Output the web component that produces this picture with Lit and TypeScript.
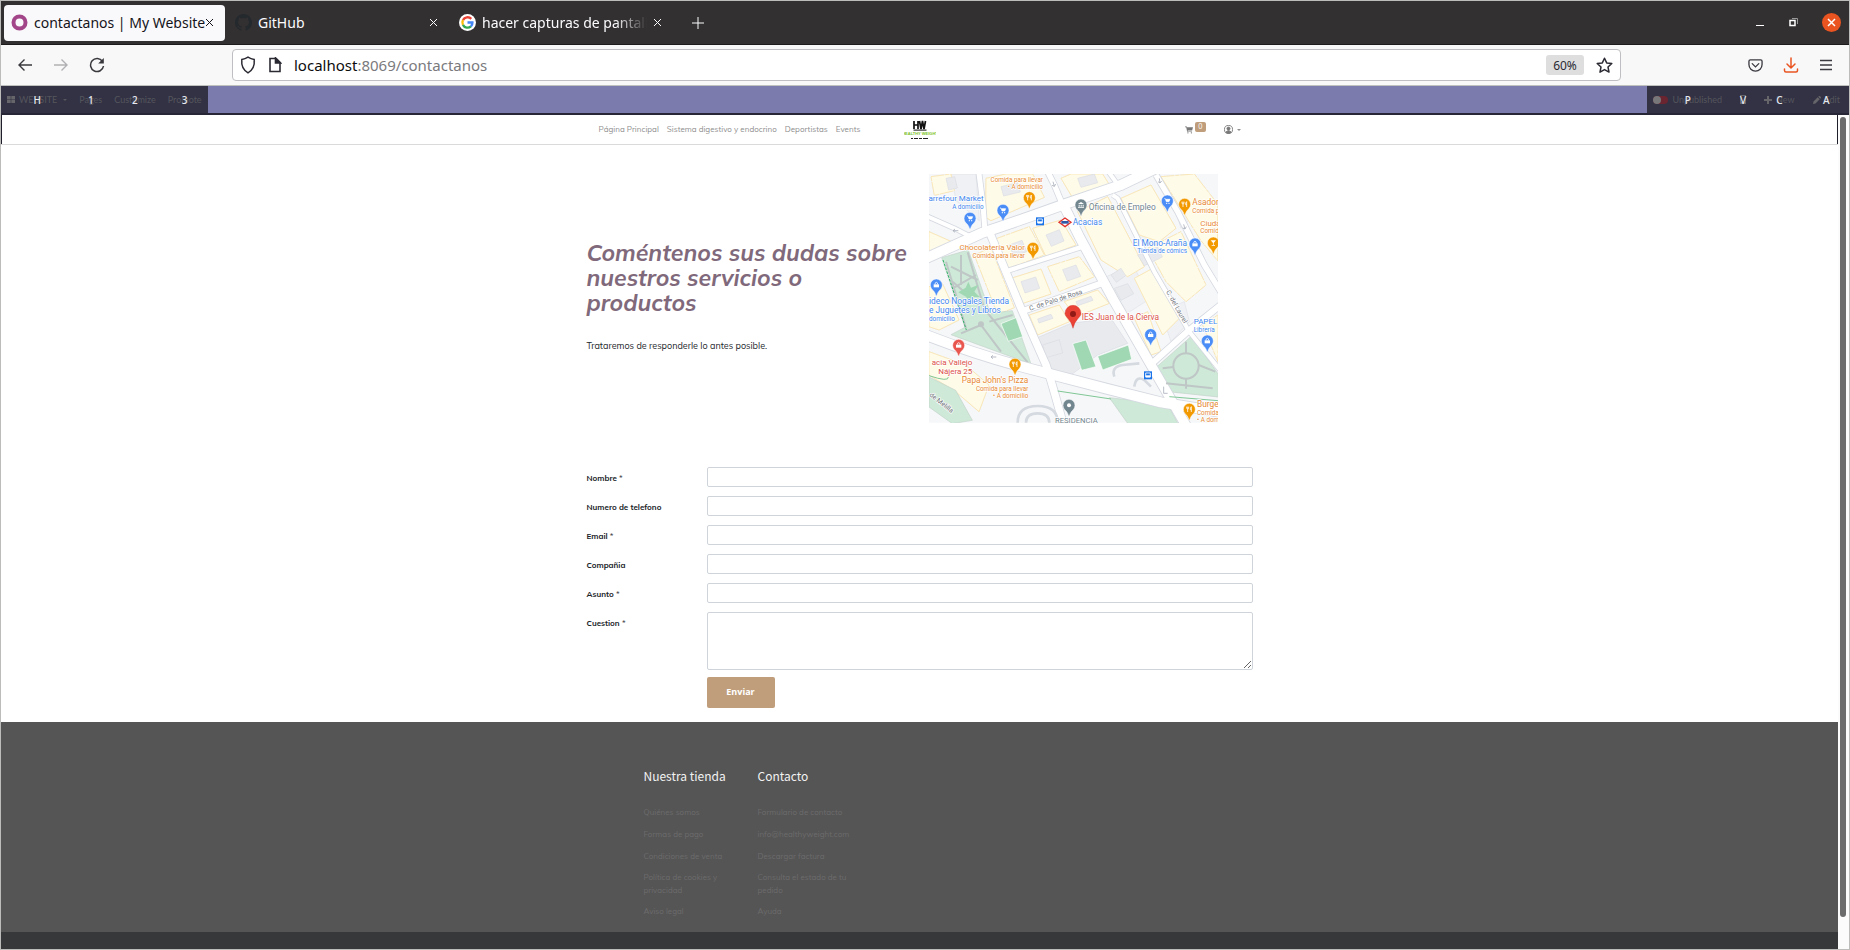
import { LitElement, html, css, svg, nothing } from "lit";
import { customElement, property } from "lit/decorators.js";

/* ---------- Browser chrome ---------- */

@customElement("browser-chrome")
class BrowserChrome extends LitElement {
  static styles = css`
    :host { display: block; font-family: "Noto Sans", "Open Sans", sans-serif; font-size: 14px; }
    button { border: 0; padding: 0; margin: 0; background: none; color: inherit; font: inherit; display: flex; align-items: center; justify-content: center; }
    svg { display: block; flex: none; }
    .tabs { display: flex; align-items: center; height: 43px; background: #333031; border-bottom: 1px solid #1d1b1c; padding: 0 8px 0 3px; color: #fbfbfe; }
    .tab { display: flex; align-items: center; gap: 6px; width: 221px; height: 36px; box-sizing: border-box; padding: 0 11px 0 7px; border-radius: 4px; white-space: nowrap; margin-right: 3px; }
    .tab.active { background: #f9f9fb; color: #15141a; }
    .title { flex: 1; min-width: 0; overflow: hidden; }
    .tab.long .title { mask-image: linear-gradient(to left, transparent, #000 32px); }
    .tab.active .title { margin-right: -6px; }
    .plus { margin-left: 16px; }
    .window { margin-left: auto; display: flex; align-items: center; gap: 24px; }
    .bar { display: flex; align-items: center; height: 40px; background: #f8f8f9; border-bottom: 1px solid #bfc1bf; color: #2b2a33; padding: 0 16px; }
    .nav { display: flex; gap: 20px; width: 215px; }
    .url { flex: 1; display: flex; align-items: center; height: 32px; box-sizing: border-box; border: 1px solid #bfbfc3; border-radius: 4px; background: #fff; padding: 0 7px; gap: 12px; font-size: 15px; }
    .address { flex: 1; margin: 0; color: #7a7a7d; white-space: nowrap; }
    .address b { font-weight: 400; color: #0c0c0d; }
    .zoom { background: #dedede; border-radius: 3px; width: 38px; height: 20px; font-size: 12px; }
    .tools { display: flex; gap: 20px; margin-left: 127px; }
  `;
  private cross() {
    return html`<button aria-label="Close tab"><svg width="9" height="9" viewBox="0 0 9 9" fill="none" stroke="currentColor"><path d="M1 1l7 7M8 1l-7 7"/></svg></button>`;
  }
  render() {
    return html`
      <div class="tabs">
        <div class="tab active">
          <svg width="17" height="17" viewBox="0 0 17 17" fill="none" stroke="#a24689" stroke-width="4"><circle cx="8.500" cy="8.500" r="6"/></svg>
          <span class="title">contactanos | My Website</span>${this.cross()}
        </div>
        <div class="tab">
          <svg width="17" height="17" viewBox="0 0 16 16" fill="#24292e"><path d="M8 0C3.580 0 0 3.580 0 8c0 3.540 2.290 6.530 5.470 7.590.4.070.55-.17.55-.38v-1.490c-2.010.37-2.530-.49-2.690-.94-.09-.23-.48-.94-.82-1.130-.28-.15-.68-.52-.01-.53.63-.01 1.080.58 1.230.82.72 1.210 1.870.87 2.330.66.07-.52.28-.87.51-1.070-1.780-.2-3.640-.89-3.640-3.950 0-.87.31-1.590.82-2.150-.08-.2-.36-1.020.08-2.120 0 0 .67-.21 2.200.82a7.400 7.400 0 0 1 4 0c1.530-1.040 2.200-.82 2.200-.82.44 1.100.16 1.920.08 2.120.51.56.82 1.270.82 2.150 0 3.070-1.870 3.750-3.650 3.950.29.25.54.73.54 1.480v2.200c0 .21.15.46.55.38A8 8 0 0 0 8 0z"/></svg>
          <span class="title">GitHub</span>${this.cross()}
        </div>
        <div class="tab long">
          <svg width="17" height="17" viewBox="0 0 18 18"><circle cx="9" cy="9" r="9" fill="#fff"/><g fill="none" stroke-width="2.500"><path d="M13 5.200A5.400 5.400 0 0 0 4.200 6.500" stroke="#ea4335"/><path d="M4.200 6.500a5.400 5.400 0 0 0 0 5" stroke="#fbbc05"/><path d="M4.200 11.500a5.400 5.400 0 0 0 8.400 1.600" stroke="#34a853"/><path d="M9 9h5.200a5.400 5.400 0 0 1-1.600 4.100" stroke="#4285f4"/></g></svg>
          <span class="title">hacer capturas de pantalla</span>${this.cross()}
        </div>
        <button class="plus" aria-label="New tab"><svg width="12" height="12" viewBox="0 0 12 12" stroke="currentColor"><path d="M6 0v12M0 6h12"/></svg></button>
        <div class="window">
          <button aria-label="Minimize"><svg width="10" height="10" viewBox="0 0 10 10" stroke="#fff"><path d="M1 7.500h8"/></svg></button>
          <button aria-label="Restore"><svg width="9" height="9" viewBox="0 0 9 9" fill="none"><path d="M3 .5h5.500V6" stroke="#999"/><path d="M1 2.500h5v5H1z" stroke="#fff" stroke-width="1.500"/></svg></button>
          <button aria-label="Close"><svg width="19" height="19" viewBox="0 0 19 19"><circle cx="9.500" cy="9.500" r="9.500" fill="#e95420"/><path d="M6 6l7 7M13 6l-7 7" stroke="#fff" stroke-width="1.500"/></svg></button>
        </div>
      </div>
      <div class="bar">
        <div class="nav">
          <button aria-label="Back"><svg width="16" height="16" viewBox="0 0 16 16" fill="none" stroke="#38383d" stroke-width="1.400"><path d="M15 8H2M7.500 2.500L2 8l5.500 5.500"/></svg></button>
          <button aria-label="Forward"><svg width="16" height="16" viewBox="0 0 16 16" fill="none" stroke="#b1b1b3" stroke-width="1.400"><path d="M1 8h13M8.500 2.500L14 8l-5.500 5.500"/></svg></button>
          <button aria-label="Reload"><svg width="16" height="16" viewBox="0 0 16 16" fill="none" stroke="#38383d" stroke-width="1.500"><path d="M13.500 4.500A6.500 6.500 0 1 0 14.500 9"/><path d="M14.800 1v5.600H9.200z" fill="#38383d" stroke="none"/></svg></button>
        </div>
        <div class="url">
          <svg width="16" height="18" viewBox="0 0 16 18" fill="none" stroke="#2b2a33" stroke-width="1.500"><path d="M8 1.200c2 1.300 4 2 6.200 2.200.6 6-1.500 10.800-6.200 13.400C3.300 14.200 1.200 9.400 1.800 3.400 4 3.200 6 2.500 8 1.200z"/></svg>
          <svg width="14" height="16" viewBox="0 0 14 16" fill="none" stroke="#2b2a33" stroke-width="1.600"><path d="M2 1.500h6l4 4v9H2z"/><path d="M7.500 1v5H12.500z" fill="#2b2a33"/></svg>
          <p class="address"><b>localhost</b>:8069/contactanos</p>
          <button class="zoom">60%</button>
          <button aria-label="Bookmark"><svg width="17" height="17" viewBox="0 0 17 17" fill="none" stroke="#2b2a33" stroke-width="1.500" stroke-linejoin="round"><path d="M8.500 1.200l2.200 4.700 5.100.6-3.800 3.500 1 5.100-4.500-2.500L4 15.100 5 10 1.200 6.500l5.100-.6z"/></svg></button>
        </div>
        <div class="tools">
          <button aria-label="Pocket"><svg width="15" height="15" viewBox="0 0 16 16" fill="none" stroke="#3a3a40" stroke-width="1.400" stroke-linecap="round"><path d="M2.500 2h11q1.500 0 1.500 1.500V7a7 7 0 0 1-14 0V3.500Q1 2 2.500 2z"/><path d="M4.500 6L8 9.500 11.500 6"/></svg></button>
          <button aria-label="Downloads"><svg width="16" height="16" viewBox="0 0 16 16" fill="none" stroke="#e95420" stroke-width="1.500" stroke-linecap="round"><path d="M8 1v10M4 7l4 4 4-4M1.500 12v1.500q0 1.500 1.500 1.500h10q1.500 0 1.500-1.500V12"/></svg></button>
          <button aria-label="Menu"><svg width="14" height="14" viewBox="0 0 14 14" stroke="#3a3a40" stroke-width="1.300"><path d="M1 2.500h12M1 7h12M1 11.500h12"/></svg></button>
        </div>
      </div>`;
  }
}

/* ---------- Editor bar with shortcut keys over each entry ---------- */

@customElement("admin-bar")
class AdminBar extends LitElement {
  static styles = css`
    :host { display: flex; justify-content: space-between; height: 27px; background: #7c7bad; border-bottom: 2px solid #262636; font-family: Lato, sans-serif; font-size: 9px; }
    .group { display: flex; align-items: center; background: #323244; color: #55555c; }
    .left { padding: 0 6px; gap: 12px; }
    .right { padding: 0 9px 0 6px; gap: 18px; }
    button { position: relative; display: flex; align-items: center; gap: 4px; border: 0; padding: 0; background: none; font: inherit; color: inherit; }
    .key { position: absolute; inset: 0; display: flex; align-items: center; justify-content: center; color: #e6e9f0; font: 500 10px/12px "Noto Sans", sans-serif; }
    .toggle { display: flex; width: 15px; height: 8px; border-radius: 4px; background: #6a2530; }
    .toggle i { width: 8px; height: 8px; border-radius: 4px; background: #77777a; }
    .caret { border: 2px solid transparent; border-top-color: currentColor; border-bottom: 0; margin-left: 2px; }
  `;
  private key(k: string) { return html`<span class="key">${k}</span>`; }
  render() {
    return html`
      <div class="group left">
        <button><svg width="8" height="7" viewBox="0 0 8 7" fill="#66666a"><path d="M0 0h3.700v3.200H0zM4.300 0H8v3.200H4.300zM0 3.800h3.700V7H0zM4.300 3.800H8V7H4.300z"/></svg>WEBSITE<span class="caret"></span>${this.key("H")}</button>
        ${[["Pages", "1"], ["Customize", "2"], ["Promote", "3"]].map(([t, k]) => html`<button>${t}${this.key(k)}</button>`)}
      </div>
      <div class="group right">
        <button><span class="toggle"><i></i></span>Unpublished${this.key("P")}</button>
        <button aria-label="Mobile preview"><svg width="6" height="9" viewBox="0 0 6 9"><path d="M0 0h6v9H0z" fill="#66666a"/><path d="M1 1h4v6H1z" fill="#323244"/></svg>${this.key("V")}</button>
        <button><svg width="8" height="8" viewBox="0 0 8 8" fill="#66666a"><path d="M3 0h2v3h3v2H5v3H3V5H0V3h3z"/></svg>New${this.key("C")}</button>
        <button><svg width="8" height="8" viewBox="0 0 8 8" fill="#66666a"><path d="M0 8l.5-2.500L4.700 1.300l2 2L2.500 7.500zM5.300.7L6 0q.5-.2 1 .2l.8.8q.4.5 0 1l-.6.7z"/></svg>Edit${this.key("A")}</button>
      </div>`;
  }
}

/* ---------- Neighbourhood map ---------- */

type Label = [string, number, number, string, number, ("start" | "end")?];

@customElement("area-map")
class AreaMap extends LitElement {
  static styles = css`
    :host { display: block; }
    svg { display: block; width: 100%; height: auto; }
    .edge { fill: none; stroke: #d5d9e0; stroke-linejoin: round; }
    .road { fill: none; stroke: #fff; stroke-linejoin: round; }
    .block { fill: #fffcf0; stroke: #e3e6ea; stroke-width: 2; stroke-linejoin: round; }
    .plain { fill: #eff1f4; stroke: #e0e3e8; stroke-width: 2; }
    .house { fill: #fffbe9; stroke: #fae5ae; stroke-width: 2.500; stroke-linejoin: round; }
    .park { fill: #cee9d7; stroke: #c3d3ca; stroke-width: 2; }
    .path { fill: none; stroke: #bfc6c6; stroke-width: 6; }
    .field { fill: #a0d8b3; stroke: #fff; stroke-width: 2; }
    .grey { fill: #e8eaee; stroke: #dadde2; stroke-width: 2; }
    text { font-family: Roboto, sans-serif; paint-order: stroke; stroke: #fff; stroke-width: 4; stroke-linejoin: round; }
  `;
  private pin(x: number, y: number, color: string, kind: string) {
    const glyph: Record<string, unknown> = {
      food: svg`<path d="M-5 -8v6M-5 -2v10M-8 -8v4q0 3 3 3t3 -3v-4M6 8v-16q-4 3 -3 9h3" fill="none" stroke="#fff" stroke-width="2.400"/>`,
      cart: svg`<path d="M-9 -7h3l3 9h8l3 -7h-12" fill="#fff" stroke="#fff" stroke-width="2"/><circle cx="-2" cy="7" r="2" fill="#fff"/><circle cx="5" cy="7" r="2" fill="#fff"/>`,
      bag: svg`<path d="M-8 -2h16v9h-16z" fill="#fff"/><path d="M-4 -2q0 -6 4 -6t4 6" fill="none" stroke="#fff" stroke-width="2.400"/>`,
      dot: svg`<circle r="6" fill="#fff"/>`,
      bank: svg`<path d="M-9 -3l9 -6 9 6zM-7 -1h3v6h-3zM-1 -1h3v6h-3zM5 -1h3v6h-3zM-9 6h18v2h-18z" fill="#fff"/>`,
      drink: svg`<path d="M-8 -8h16l-7 8v6h4v2h-10v-2h4v-6z" fill="#fff"/>`,
    };
    return svg`<g transform="translate(${x} ${y})"><path d="M-18 0a18 18 0 1 1 36 0c0 9 -6 14 -10 18q-5 6 -7 14h-2q-2 -8 -7 -14c-4 -4 -10 -9 -10 -18z" fill=${color} stroke="#fff" stroke-width="1.500"/>${glyph[kind]}</g>`;
  }
  render() {
    const roads: [string, number][] = [
      ["M10 282L180 205Q300 165 430 118L600 60 700 12", 30],
      ["M172 10L186 120 192 200", 15],
      ["M205 200L300 430 375 600Q395 660 430 790", 22],
      ["M425 115L475 215 575 400 690 600 800 790", 28],
      ["M10 508Q180 575 360 620L560 672 720 712 905 742", 30],
      ["M705 30L770 140 850 300 905 390", 16],
      ["M575 90L590 100 700 320 805 500 905 625", 12],
      ["M690 598L805 495 905 415", 18],
      ["M245 322L485 245", 13],
      ["M300 440L430 395 550 352", 18],
      ["M375 10L400 60 425 120", 16],
      ["M555 10L595 65", 12],
      ["M10 150L100 190 150 215", 12],
    ];
    const houses = [
      "M30 35l60 -8 10 50 -60 14z", "M195 40l60 -13h80l35 70 -160 70 -16 -10z", "M420 40l30 -13h95l25 40 -110 40z",
      "M215 225l110 -40 45 85 -120 45z", "M335 190l85 -25 45 75 -90 35z", "M270 340l90 -28 30 75 -90 30z", "M380 305l95 -30 45 60 -105 45z",
      "M325 450l90 -30 30 50 -95 40z", "M430 410l100 -35 35 40 -100 40z", "M160 270l50 -22 70 180 -50 20z",
      "M470 140l90 -45 110 210 -50 30 -80 -50z", "M600 100l90 -40 75 130 -50 40 -60 -20z", "M680 250l100 -50 75 160 -60 50 -60 -60z",
      "M640 340l55 -30 80 150 -50 50z", "M24 365l40 -10 50 110 -60 30 -30 -10z", "M720 35l100 -8 70 90v170l-50 -60z",
      "M640 460l40 -20 40 120 -30 10z", "M24 560l110 40 70 60 -30 80 -70 -60 -80 -50z", "M845 480l46 -30v140z", "M24 200l90 40 -90 30z",
    ];
    const plains = ["M545 340l90 -40 55 100 -80 50z", "M655 110l55 120 -45 15 -40 -80z", "M720 440l70 -30 15 60 -55 60z", "M90 27h75l10 140 -70 -60z", "M740 60l70 100 -30 30z"];
    const courts = ["M240 65l50 -12 8 28 -50 12z", "M375 210l40 -16 14 34 -38 16z", "M265 240l38 -14 14 34 -38 14z", "M300 350l44 -14 12 34 -44 14z", "M425 314l40 -14 14 34 -40 14z", "M350 462l40 -14 6 12 -42 14z", "M465 410l45 -16 6 12 -46 16z", "M75 40l26 -5 8 34 -26 6z", "M470 40l50 -13 10 26 -50 14z"];
    const O = "#e88a32", B = "#4287ee", R = "#dc5149", G = "#72858e";
    const labels: Label[] = [
      ["Comida para llevar", 366, 50, O, 19, "end"], ["• A domicilio", 366, 72, O, 19, "end"],
      ["arrefour Market", 188, 108, B, 24, "end"], ["A domicilio", 188, 132, B, 19, "end"],
      ["Oficina de Empleo", 503, 136, G, 25], ["Acacias", 455, 181, B, 25],
      ["Asador", 814, 121, O, 25], ["Comida p", 814, 144, O, 19], ["Ciuda", 838, 182, O, 24], ["Comid", 838, 205, O, 19],
      ["Chocolatería Valor", 312, 255, O, 24, "end"], ["Comida para llevar", 312, 278, O, 19, "end"],
      ["El Mono-Araña", 798, 242, B, 25, "end"], ["Tienda de cómics", 798, 265, B, 19, "end"],
      ["ideco Nogales Tienda", 24, 417, B, 25], ["e Juguetes y Libros", 24, 444, B, 25], ["domicilio", 24, 467, B, 19],
      ["IES Juan de la Cierva", 482, 465, R, 25], ["PAPEL", 818, 477, B, 24], ["Librería", 818, 500, B, 19],
      ["acia Vallejo", 154, 599, R, 24, "end"], ["Nájera 25", 154, 626, R, 24, "end"],
      ["Papa John's Pizza", 322, 655, O, 25, "end"], ["Comida para llevar", 322, 678, O, 19, "end"], ["• A domicilio", 322, 700, O, 19, "end"],
      ["RESIDENCIA", 402, 775, G, 23], ["Burge", 828, 727, O, 25], ["Comida", 828, 750, O, 19], ["• A dom", 828, 772, O, 19],
    ];
    return html`<svg viewBox="24 27 867 746" role="img" aria-label="Mapa">
      <path d="M24 27h867v746h-867z" fill="#f6f7f9"/>
      ${houses.map((d) => svg`<path class="block" d=${d}/>`)}
      ${plains.map((d) => svg`<path class="plain" d=${d}/>`)}
      ${houses.map((d, i) => svg`<path class="house" d=${d} stroke-dasharray=${i % 3 ? nothing : "40 3 12 3"}/>`)}
      ${courts.map((d) => svg`<path class="grey" d=${d}/>`)}
      <path class="grey" d="M345 520l105 -45 120 -15 50 75 -90 35 -80 60 -60 -10zM365 540l50 -16 10 40 -50 14z"/>
      <path class="grey" d="M570 330l30 -20 14 22 -28 20zM650 270l60 -24 14 30 -54 26zM580 370l40 -14 18 30 -38 20z"/>
      <path class="park" d="M62 278l80 -23 66 190 66 -8 56 160 -240 -88 42 -22z"/>
      <path class="path" d="M75 290l60 200M140 262l50 170 130 160M95 350l80 70M165 330l-70 40M90 305l80 40M120 270l0 90M180 480l-60 25M205 470l70 -20M180 480l60 80"/>
      <circle cx="180" cy="478" r="9" fill="#bfc6c6"/>
      <path d="M112 382l22 -14 8 -18 8 18 22 -8 -12 20 16 16 -22 0 -10 22 -8 -22z" fill="#a0d8b3"/>
      <path d="M66 285l70 210" fill="none" stroke="#34b36a" stroke-width="3" stroke-dasharray="8 4"/>
      <path class="park" d="M24 636l80 40 50 90 -60 10 -70 -50z"/>
      <path class="park" d="M565 698l175 20 32 60h-150z"/>
      <path class="park" d="M708 605l104 -92 80 115v68l-150 -16z"/>
      ${roads.map(([d, w]) => svg`<path class="edge" d=${d} stroke-width=${w + 5}/>`)}
      ${roads.map(([d, w]) => svg`<path class="road" d=${d} stroke-width=${w}/>`)}
      <circle cx="795" cy="603" r="38" class="path"/>
      <path class="path" d="M795 530v35M795 641v30M725 610l32 -4M833 600l50 20M735 655l140 15"/>
      <path class="field" d="M455 536l40 -11 30 80 -43 11zM530 574l92 -34 10 43 -87 32zM240 476l45 -18 20 57 -43 14z"/>
      <path d="M580 635q-10 -30 25 -35l50 -5M640 665q5 -35 30 -20l20 20M290 773q0 -50 60 -50t60 50M315 773q0 -28 35 -28t35 28" fill="none" stroke="#d5d9e0" stroke-width="8"/>
      <path d="M410 678l160 24M745 695l146 12M24 632q60 20 58 4" fill="none" stroke="#7fc796" stroke-width="3"/>
      <path d="M112 197h-16l6 -5m-6 5l6 5M226 576h-16l6 -5m-6 5l6 5M396 50l4 14 4 -7m-4 7l-7 -3M715 40l2 14 5 -6m-5 6l-6 -4M788 178l4 14 4 -7m-4 7l-7 -3M728 665v20h12" fill="none" stroke="#a9afba" stroke-width="2.500"/>
      <g font-size="20" fill="#6d7278">
        <text transform="translate(327 437) rotate(-18)">C. de Palo de Rosa</text>
        <text transform="translate(735 380) rotate(61)">C. del Laurel</text>
        <text transform="translate(24 692) rotate(38)">de Melilla</text>
      </g>
      ${labels.map(([t, x, y, c, s, a]) => svg`<text x=${x} y=${y} fill=${c} font-size=${s} text-anchor=${a ?? "start"}>${t}</text>`)}
      ${[[325, 98], [791, 118], [336, 250], [282, 598], [805, 733]].map(([x, y]) => this.pin(x, y, "#f29900", "food"))}
      ${[[147, 160], [246, 136], [739, 108]].map(([x, y]) => this.pin(x, y, "#4a8df6", "cart"))}
      ${[[46, 360], [822, 237], [689, 509], [859, 528]].map(([x, y]) => this.pin(x, y, "#4a8df6", "bag"))}
      ${this.pin(480, 120, "#71868f", "bank")}
      ${this.pin(444, 721, "#71868f", "dot")}
      ${this.pin(877, 234, "#f29900", "drink")}
      ${this.pin(113, 541, "#e8564e", "bag")}
      <path d="M456 490q-3 -16 -14 -28c-7 -8 -10 -12 -10 -17a24 24 0 1 1 48 0c0 5 -3 9 -10 17q-11 12 -14 28z" fill="#ea4335" stroke="#c5221f"/>
      <circle cx="456" cy="447" r="9" fill="#921a16"/>
      <path d="M414 172l18 -13 18 13 -18 13z" fill="#fff" stroke="#e0312c" stroke-width="4"/><path d="M421 168h22v8h-22z" fill="#2e58a6"/>
      ${[[357, 169], [681, 631]].map(([x, y]) => svg`<g transform="translate(${x} ${y})"><path d="M-12 -12h24v24h-24z" fill="#1a73e8"/><path d="M-7 -7h14v12h-14z" fill="none" stroke="#fff" stroke-width="2.500"/><path d="M-7 0h14v6h-14z" fill="#fff"/></g>`)}
    </svg>`;
  }
}

/* ---------- Website ---------- */

@customElement("form-row")
class FormRow extends LitElement {
  @property() label = "";
  @property({ type: Boolean }) required = false;
  @property({ type: Boolean }) long = false;
  static styles = css`
    :host { display: grid; grid-template-columns: 120px 1fr; align-items: start; }
    label { font-weight: 700; font-size: 8px; line-height: 12px; padding-top: 5px; color: #212529; }
    label span { font-weight: 400; }
    input, textarea { display: block; width: 100%; height: 20px; box-sizing: border-box; margin: 0; padding: 2px 6px; border: 1px solid #ced4da; border-radius: 2px; background: #fff; font: 8px/12px Lato, sans-serif; outline: 0; }
    textarea { height: 58px; resize: both; }
  `;
  render() {
    return html`<label for="field">${this.label}${this.required ? html` <span>*</span>` : nothing}</label>
      ${this.long ? html`<textarea id="field"></textarea>` : html`<input id="field" type="text">`}`;
  }
}

@customElement("site-page")
class SitePage extends LitElement {
  static styles = css`
    :host { display: block; font-family: Mulish, Nunito, Lato, sans-serif; font-size: 8px; line-height: 13px; color: #212529; background: #fff; }
    a { color: inherit; text-decoration: none; }
    svg { display: block; }
    .container { width: 666px; max-width: 100%; margin: 0 auto; }
    header { border: 1px solid #dadada; border-width: 0 0 1px; background: linear-gradient(#1f1f2c, #1f1f2c) left / 1px 100% no-repeat, linear-gradient(#1f1f2c, #1f1f2c) right / 1px 100% no-repeat; }
    .head { display: grid; grid-template-columns: 1fr auto 1fr; align-items: center; height: 29px; padding: 0 12px; box-sizing: border-box; color: #8f8f8f; }
    nav { display: flex; gap: 8px; white-space: nowrap; }
    .user { display: flex; justify-content: flex-end; align-items: center; gap: 18px; }
    .user a { display: flex; align-items: center; gap: 4px; }
    .cart .count { align-self: flex-start; background: #c09e7b; color: #fff; border-radius: 2px; padding: 0 3px; font-size: 7px; line-height: 10px; margin: -3px 0 3px -2px; }
    .caret { border: 2px solid transparent; border-top-color: currentColor; border-bottom: 0; }
    .hero { display: grid; grid-template-columns: 324px 289px; gap: 18px; padding: 29px 0 44px; }
    h1 { margin: 66px 0 24px; font-size: 23px; line-height: 25px; font-weight: 700; font-style: italic; color: #80697b; }
    .hero p { margin: 0; font-size: 9px; line-height: 13px; }
    form { display: flex; flex-direction: column; gap: 9px; padding-bottom: 14px; }
    .send { margin: -2px 0 0 120px; align-self: flex-start; width: 68px; height: 31px; border: 0; border-radius: 2px; background: #c09e7b; color: #fff; font: 700 9px/12px "Open Sans", sans-serif; }
    footer { background: #555; color: #6c6b6c; }
    .links { display: flex; gap: 18px; padding: 46px 0 6px 57px; box-sizing: border-box; }
    .col { width: 96px; }
    h2 { margin: 0 0 22px; font: 400 12px/16px "Noto Sans CJK SC", "Noto Sans", sans-serif; color: #f2f2f2; }
    ul { list-style: none; margin: 0; padding: 0; }
    li { margin-bottom: 9px; }
    li:nth-child(n + 3) { margin-bottom: 8px; }
    .legal { background: #373839; color: #a5a5a5; }
    .legal .container { display: grid; grid-template-columns: 378px 1fr; padding: 20px 0 24px; }
    .legal .container a { color: #3aadaa; }
    .social { display: flex; gap: 34px; }
  `;
  private readonly menu = ["Página Principal", "Sistema digestivo y endocrino", "Deportistas", "Events"];
  private readonly columns: [string, string[]][] = [
    ["Nuestra tienda", ["Quiénes somos", "Formas de pago", "Condiciones de venta", "Política de cookies y privacidad", "Aviso legal"]],
    ["Contacto", ["Formulario de contacto", "info@healthyweight.com", "Descargar factura", "Consulta el estado de tu pedido", "Ayuda"]],
  ];
  private readonly social = [
    "M5 10V6h2l.3-2H5V3q0-1 1-1h1.400V0H5.500Q3 0 3 2.500V4H1v2h2v4z",
    "M0 9q2 0 3-1-1.500 0-2-1.500h1Q.3 6 .4 4.200l.8.3Q-.1 3 .7 1.500 2.500 3.600 5 3.700 4.600 1 7 .8q1 0 1.600.6L9.900 1l-.8 1.200L10 2l-1 1Q9 9.800 3 9.800 1.300 9.800 0 9z",
    "M5 0a4.500 4.500 0 0 0-2 8.500V8l1-4.500q2-1.500 2 .5T5 6.500q1.500.5 2-2T5 2 2.800 5Q1.500 4 2.500 2T6 1.200 7.500 5 5 7.500L4 10h1a5 5 0 0 0 0-10z",
    "M0 1h4v3h2V1h4v9H8V6L5 9 2 6v4H0z",
  ];
  render() {
    return html`
      <header><div class="container head">
        <nav>${this.menu.map((m) => html`<a href="#">${m}</a>`)}</nav>
        <a href="#" aria-label="Healthy Weight"><svg width="32" height="20" viewBox="0 0 32 20">
          <path d="M10 1v8M14 1v8M10 5h4M15.500 1l1.500 8 1.500-8 1.500 8 1.500-8" fill="none" stroke="#111" stroke-width="1.700"/><path d="M9.500 9.500h13v1.200h-13z" fill="#333"/>
          <text x="16" y="15" text-anchor="middle" textLength="" font-family="Liberation Sans, sans-serif" font-size="4" font-weight="700" fill="#7ac21f">HEALTHY WEIGHT</text>
          <path d="M7 18.500h2M10 18.500h4M15 18.500h3M19 18.500h5" stroke="#222" stroke-width="1.200"/></svg></a>
        <div class="user">
          <a class="cart" href="#"><svg width="8" height="8" viewBox="0 0 9 8" fill="#777"><path d="M0 0h2l.4 1H9L8 4.500H3l.2.8h4.600v.8H2.400L1.400.9H0z"/><circle cx="3.300" cy="7.200" r=".8"/><circle cx="7.200" cy="7.200" r=".8"/></svg><span class="count">0</span></a>
          <a href="#" aria-label="Account"><svg width="9" height="9" viewBox="0 0 10 10" fill="none" stroke="#777"><circle cx="5" cy="5" r="4.500"/><circle cx="5" cy="4" r="1.700" fill="#777"/><path d="M2 8q3-3.500 6 0l-3 1.500z" fill="#777"/></svg><span class="caret"></span></a>
        </div>
      </div></header>
      <main class="container">
        <section class="hero">
          <div><h1>Coméntenos sus dudas sobre nuestros servicios o productos</h1><p>Trataremos de responderle lo antes posible.</p></div>
          <area-map></area-map>
        </section>
        <form @submit=${(e: Event) => e.preventDefault()}>
          <form-row label="Nombre" required></form-row>
          <form-row label="Numero de telefono"></form-row>
          <form-row label="Email" required></form-row>
          <form-row label="Compañia"></form-row>
          <form-row label="Asunto" required></form-row>
          <form-row label="Cuestion" required long></form-row>
          <button class="send">Enviar</button>
        </form>
      </main>
      <footer><div class="container links">
        ${this.columns.map(([t, items]) => html`<div class="col"><h2>${t}</h2><ul>${items.map((i) => html`<li><a href="#">${i}</a></li>`)}</ul></div>`)}
      </div></footer>
      <div class="legal"><div class="container">
        <span>Copyright © 2020. All Rights Reserved. theme by <a href="#">Cybrosys</a></span>
        <div class="social">${this.social.map((d) => html`<svg width="9" height="10" viewBox="0 0 10 10" fill="#c8c8c8"><path d=${d}/></svg>`)}</div>
      </div></div>`;
  }
}

@customElement("app-root")
class AppRoot extends LitElement {
  static styles = css`
    :host { display: flex; flex-direction: column; height: 100vh; box-sizing: border-box; border: 1px solid #bcbcba; overflow: hidden; background: #fff; }
    .view { flex: 1; min-height: 0; display: flex; }
    .page { flex: 1; min-width: 0; overflow: hidden; }
    .scroll { width: 11px; background: #fbfbfb; padding: 2px 3px 32px 2px; box-sizing: border-box; display: flex; }
    .thumb { flex: 1; border-radius: 3px; background: #6b6b6b; }
  `;
  render() {
    return html`<browser-chrome></browser-chrome><admin-bar></admin-bar>
      <div class="view"><site-page class="page"></site-page><div class="scroll"><div class="thumb"></div></div></div>`;
  }
}
